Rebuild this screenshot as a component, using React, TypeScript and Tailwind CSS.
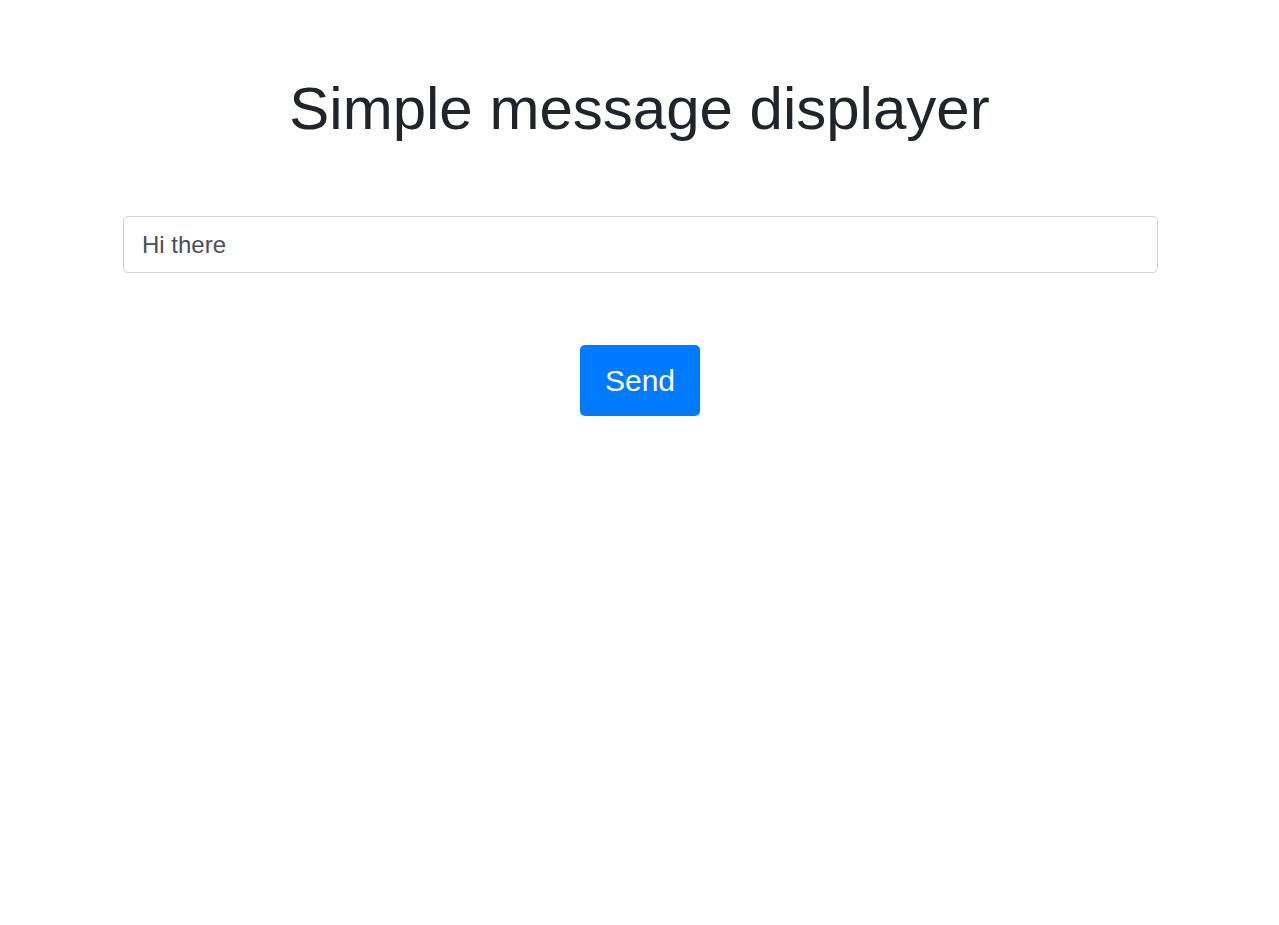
import React, { useState } from 'react';

const App: React.FC = () => {
  const [message, setMessage] = useState('Hi there');

  return (
    <div className="min-h-screen bg-white font-['Liberation_Sans',Arial,sans-serif]">
      <div className="flex flex-col items-center pt-[73px]">
        <h1 className="text-[60px] leading-[72px] font-normal text-[#212529]">
          Simple message displayer
        </h1>

        {/* Message input */}
        <div className="mt-[71px] w-[1035px] ml-[2px]">
          <input
            type="text"
            value={message}
            onChange={e => setMessage(e.target.value)}
            className="w-full h-[57px] pl-[18px] pr-4 text-[24px] text-[#495057] bg-white border border-[#ced4da] rounded-[5px] outline-none"
          />
        </div>

        <button className="mt-[72px] w-[120px] h-[71px] ml-[1px] rounded-[5px] bg-[#007bff] text-white text-[30px] leading-none">
          Send
        </button>
      </div>
    </div>
  );
};

export default App;
